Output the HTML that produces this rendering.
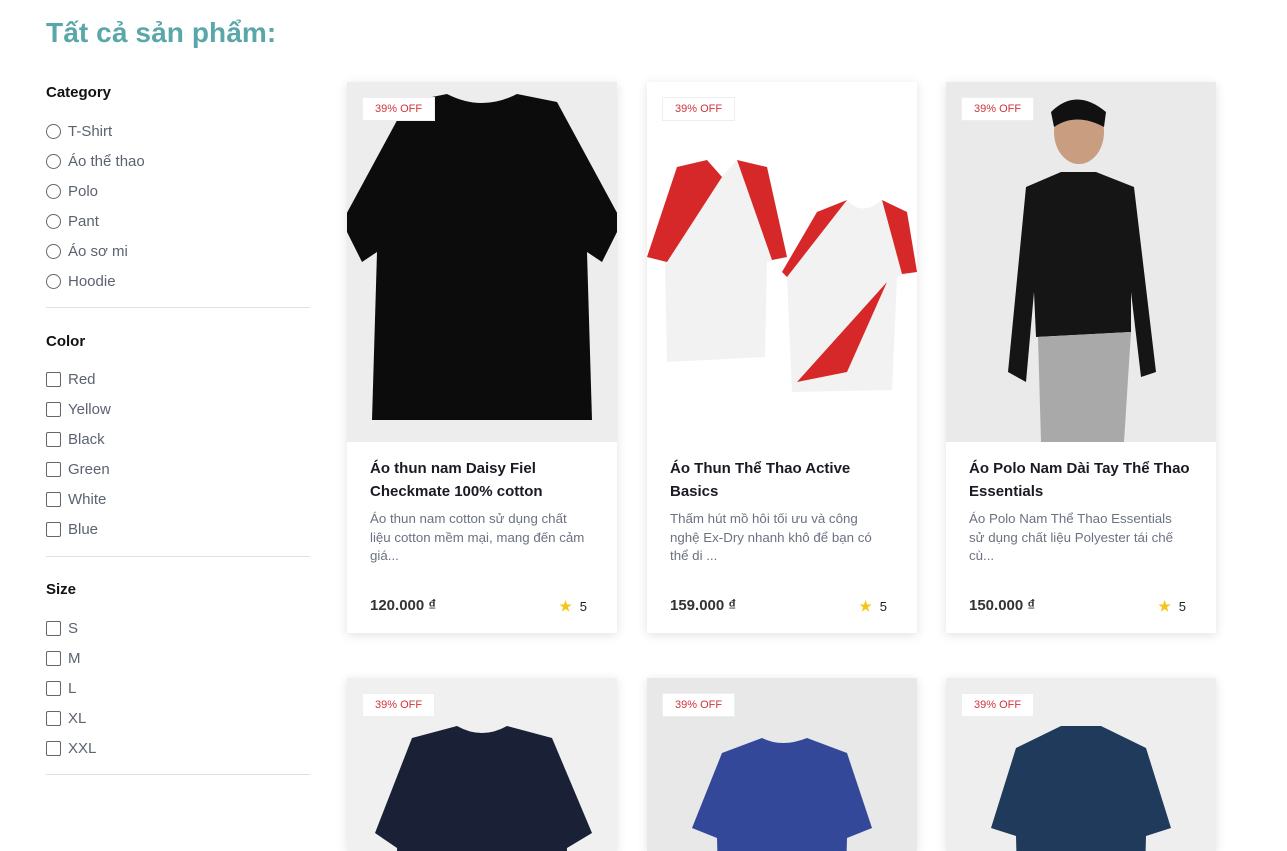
<!DOCTYPE html>
<html><head><meta charset="utf-8"><style>
*{margin:0;padding:0;box-sizing:border-box}
html,body{width:1287px;height:851px;overflow:hidden}
body{background:#fff;font-family:"Liberation Sans",sans-serif;position:relative}
h1{position:absolute;left:46px;top:17px;font-size:28px;color:#5aa7aa;font-weight:bold;letter-spacing:.1px}
.side{position:absolute;left:46px;top:0;width:264px}
.h{position:absolute;left:0;font-size:15px;font-weight:bold;color:#111}
.it{position:absolute;left:0;font-size:15px;color:#5b6270;display:flex;align-items:center}
.it i{display:inline-block;width:15px;height:15px;border:1.3px solid #666;margin-right:7px}
.r i{border-radius:50%}
.c i{border-radius:2px}
.hr{position:absolute;left:0;width:264px;border-top:1px solid #dde0e5}
.card{position:absolute;width:270px;height:551px;background:#fff;box-shadow:0 2px 10px rgba(0,0,0,.12)}
.card.sh{height:173px;overflow:hidden}
.img{height:360px;background:#ededed;position:relative;overflow:hidden}
.tag{position:absolute;left:15px;top:15px;background:#fff;color:#d0333a;font-size:11px;padding:5px 12px;border:1px solid #eee}
.t{position:absolute;left:23px;top:375px;width:230px;font-size:15px;font-weight:bold;color:#1a1a24;line-height:23px}
.d{position:absolute;left:23px;top:428px;width:218px;font-size:13.3px;color:#6b7280;line-height:18.5px}
.p{position:absolute;left:23px;top:515px;font-size:15px;font-weight:bold;color:#333}
.s{position:absolute;right:30px;top:516px;font-size:13px;color:#222}
.s b{color:#f5c518;margin-right:8px;font-size:14px}
</style></head><body>
<h1>Tất cả sản phẩm:</h1>
<div class="side">
<div class="h" style="top:84px">Category</div>
<div class="it r" style="top:123px"><i></i>T-Shirt</div>
<div class="it r" style="top:153px"><i></i>Áo thể thao</div>
<div class="it r" style="top:183px"><i></i>Polo</div>
<div class="it r" style="top:213px"><i></i>Pant</div>
<div class="it r" style="top:243px"><i></i>Áo sơ mi</div>
<div class="it r" style="top:273px"><i></i>Hoodie</div>
<div class="hr" style="top:307px"></div>
<div class="h" style="top:333px">Color</div>
<div class="it c" style="top:371px"><i></i>Red</div>
<div class="it c" style="top:401px"><i></i>Yellow</div>
<div class="it c" style="top:431px"><i></i>Black</div>
<div class="it c" style="top:461px"><i></i>Green</div>
<div class="it c" style="top:491px"><i></i>White</div>
<div class="it c" style="top:521px"><i></i>Blue</div>
<div class="hr" style="top:556px"></div>
<div class="h" style="top:581px">Size</div>
<div class="it c" style="top:620px"><i></i>S</div>
<div class="it c" style="top:650px"><i></i>M</div>
<div class="it c" style="top:680px"><i></i>L</div>
<div class="it c" style="top:710px"><i></i>XL</div>
<div class="it c" style="top:740px"><i></i>XXL</div>
<div class="hr" style="top:774px"></div>
</div>

<div class="card" style="left:347px;top:82px"><div class="img">
<svg width="270" height="360"><path d="M60 20 L100 12 Q135 30 170 12 L210 20 L275 140 L255 180 L240 170 L245 338 L25 338 L30 170 L15 180 L-5 140 Z" fill="#0c0c0c"/></svg>
<div class="tag">39% OFF</div></div>
<div class="t">Áo thun nam Daisy Fiel Checkmate 100% cotton</div>
<div class="d">Áo thun nam cotton sử dụng chất liệu cotton mềm mại, mang đến cảm giá...</div>
<div class="p">120.000 ₫</div><div class="s"><b>★</b>5</div></div>

<div class="card" style="left:647px;top:82px"><div class="img" style="background:#fff">
<svg width="270" height="360"><path d="M30 85 L60 78 L70 100 L90 78 L120 85 L140 175 L120 180 L118 275 L20 280 L18 180 L0 175 Z" fill="#f2f2f2"/><path d="M30 85 L60 78 L75 95 L20 180 L0 175 Z" fill="#d62828"/><path d="M90 78 L120 85 L140 175 L125 178 Z" fill="#d62828"/><path d="M170 130 L200 118 Q215 135 235 118 L260 130 L270 190 L250 195 L245 308 L145 310 L140 195 L135 190 Z" fill="#f2f2f2"/><path d="M170 130 L200 118 L140 195 L135 190 Z" fill="#d62828"/><path d="M235 118 L260 130 L270 190 L255 192 Z" fill="#d62828"/><path d="M150 300 L240 200 L200 290 Z" fill="#d62828"/></svg>
<div class="tag">39% OFF</div></div>
<div class="t">Áo Thun Thể Thao Active Basics</div>
<div class="d">Thấm hút mồ hôi tối ưu và công nghệ Ex-Dry nhanh khô để bạn có thể di ...</div>
<div class="p">159.000 ₫</div><div class="s"><b>★</b>5</div></div>

<div class="card" style="left:946px;top:82px"><div class="img" style="background:#eaeaea">
<svg width="270" height="360"><ellipse cx="133" cy="50" rx="25" ry="32" fill="#c99d80"/><path d="M105 30 Q130 5 160 30 L158 45 Q130 30 108 45Z" fill="#111"/><path d="M80 105 L115 90 L150 90 L188 105 L210 290 L195 295 L185 210 L185 250 L90 255 L88 210 L80 300 L62 290 Z" fill="#151515"/><path d="M92 255 L185 250 L178 360 L95 360 Z" fill="#a9a9a9"/></svg>
<div class="tag">39% OFF</div></div>
<div class="t">Áo Polo Nam Dài Tay Thể Thao Essentials</div>
<div class="d">Áo Polo Nam Thể Thao Essentials sử dụng chất liệu Polyester tái chế cù...</div>
<div class="p">150.000 ₫</div><div class="s"><b>★</b>5</div></div>

<div class="card sh" style="left:347px;top:678px"><div class="img" style="background:#f0f0f0">
<svg width="270" height="360"><path d="M65 60 L110 48 Q135 62 160 48 L205 60 L245 155 L220 170 L215 360 L55 360 L50 170 L28 155 Z" fill="#1a2036"/></svg>
<div class="tag">39% OFF</div></div></div>
<div class="card sh" style="left:647px;top:678px"><div class="img" style="background:#e8e8e8">
<svg width="270" height="360"><path d="M75 75 L115 60 Q135 70 160 60 L200 75 L225 150 L200 160 L195 360 L75 360 L70 160 L45 150 Z" fill="#34489a"/></svg>
<div class="tag">39% OFF</div></div></div>
<div class="card sh" style="left:946px;top:678px"><div class="img" style="background:#eeeeee">
<svg width="270" height="360"><path d="M70 70 L115 48 L155 48 L200 70 L225 150 L200 158 L195 360 L75 360 L70 158 L45 150 Z" fill="#1f3a5a"/></svg>
<div class="tag">39% OFF</div></div></div>
</body></html>
